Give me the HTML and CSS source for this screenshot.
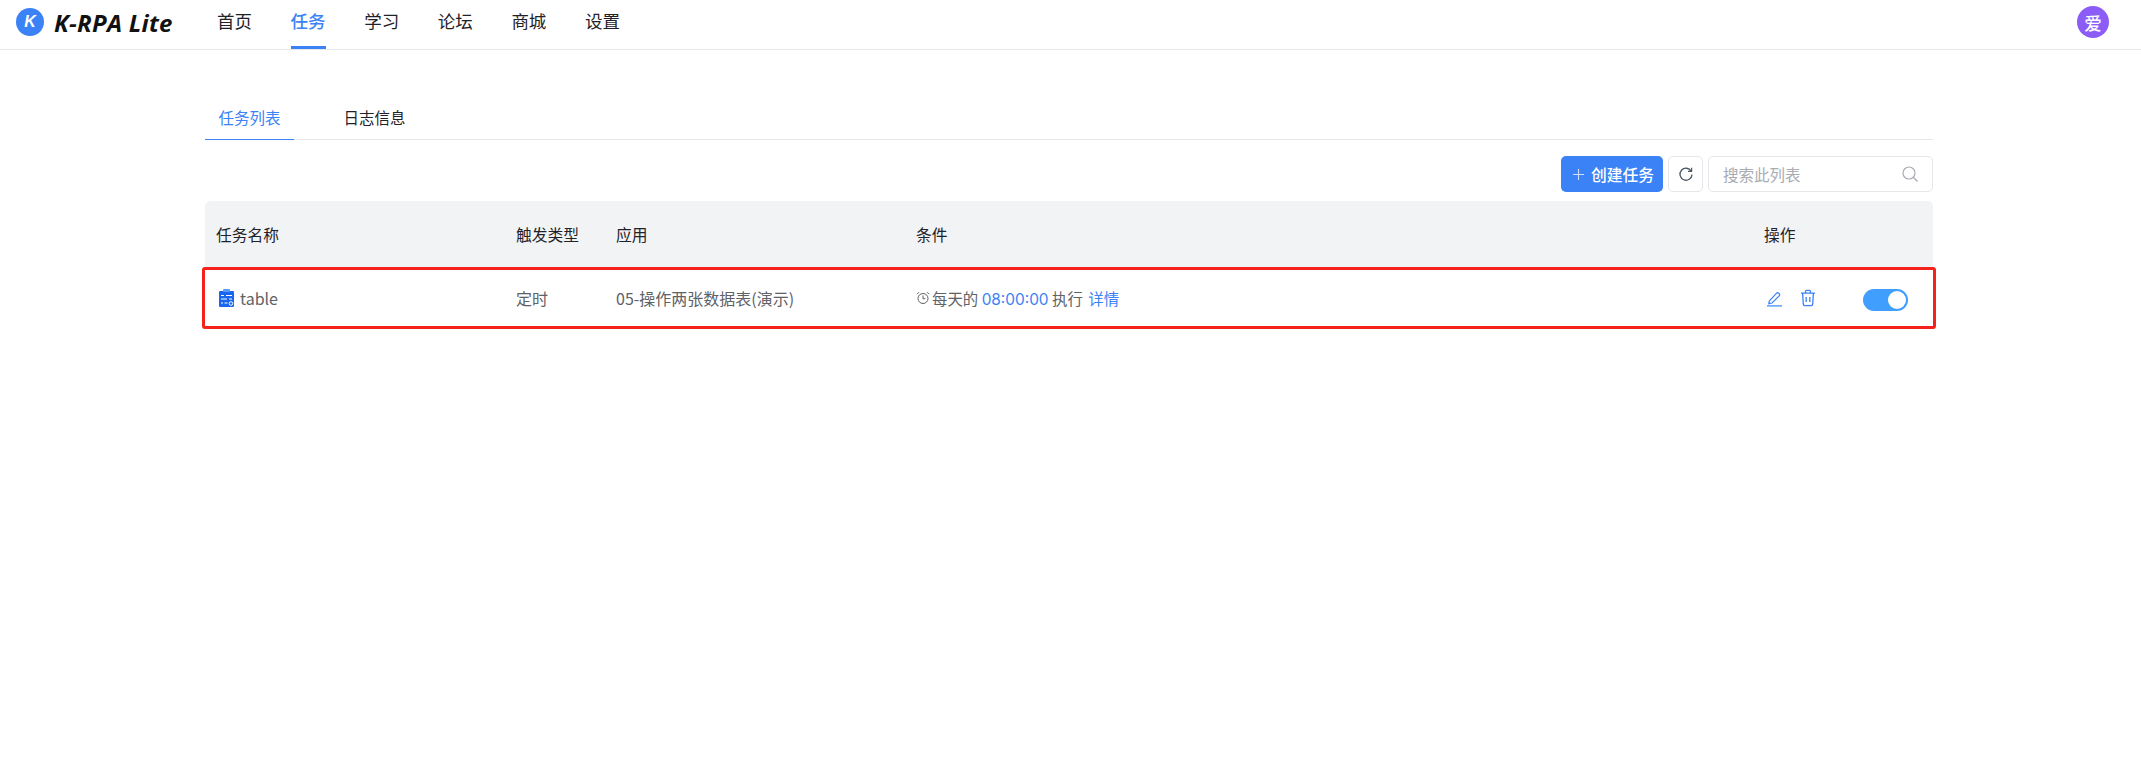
FILE: index.html
```html
<!DOCTYPE html>
<html lang="zh-CN">
<head>
    <meta charset="UTF-8">
    <title>K-RPA Lite</title>
    <link rel="stylesheet" href="styles.css">
</head>
<body>
    <header class="navbar">
        <div class="brand">
            <span class="brand-logo">K</span>
            <span class="brand-name">K-RPA Lite</span>
        </div>
        <nav class="nav">
            <a class="nav-item">首页</a>
            <a class="nav-item active">任务</a>
            <a class="nav-item">学习</a>
            <a class="nav-item">论坛</a>
            <a class="nav-item">商城</a>
            <a class="nav-item">设置</a>
        </nav>
        <span class="avatar">爱</span>
    </header>

    <main class="content">
        <div class="tabs">
            <a class="tab active">任务列表</a>
            <a class="tab">日志信息</a>
        </div>

        <div class="toolbar">
            <button class="btn-primary">
                <svg class="plus" width="11" height="11" viewBox="0 0 11 11" stroke="#fff" stroke-width="1.1">
                    <path d="M5.5 0v11M0 5.5h11"/>
                </svg>
                创建任务
            </button>
            <button class="btn-icon">
                <svg width="18" height="18" viewBox="0 0 18 18" fill="none" stroke="#4b5563" stroke-width="1.3">
                    <path d="M14.2 6.2A6 6 0 1 0 15 9.6"/>
                    <path d="M14.6 2.8v3.6H11" stroke-width="1.2"/>
                </svg>
            </button>
            <div class="search">
                <span class="search-text">搜索此列表</span>
                <svg width="18" height="18" viewBox="0 0 18 18" fill="none" stroke="#a8abb2" stroke-width="1.2">
                    <circle cx="8" cy="8" r="6"/>
                    <path d="M12.5 12.5L16.5 16.5"/>
                </svg>
            </div>
        </div>

        <div class="table-head grid-row">
            <div>任务名称</div>
            <div>触发类型</div>
            <div>应用</div>
            <div>条件</div>
            <div>操作</div>
        </div>

        <div class="table-row grid-row">
            <div class="task-name">
                <svg width="15" height="18" viewBox="0 0 15 18">
                    <rect x="0" y="2" width="15" height="16" rx="1" fill="#1a66f0"/>
                    <rect x="4" y="0" width="7" height="3" rx="1" fill="#5b9bf8"/>
                    <path d="M2 6.5h3M7 6.5h6M2 10h6M10 10h3M2 14h2M5.5 14h3" stroke="#fff" stroke-width="1.2"/>
                    <circle cx="12" cy="14.5" r="1.8" fill="none" stroke="#fff"/>
                </svg>
                <span>table</span>
            </div>
            <div>定时</div>
            <div>05-操作两张数据表(演示)</div>
            <div class="condition">
                <svg width="14" height="14" viewBox="0 0 14 14" fill="none" stroke="#606266">
                    <circle cx="7" cy="7.5" r="5"/>
                    <path d="M7 4.5v3.2h2.4M1 3.2L3 1.2M13 3.2L11 1.2"/>
                </svg>
                <span>每天的 <span class="link time">08:00:00</span> 执行 <span class="link detail">详情</span></span>
            </div>
            <div class="actions">
                <svg width="17" height="17" viewBox="0 0 17 17" fill="none" stroke="#3b82f6" stroke-width="1.2">
                    <path d="M3.4 10.8L10.6 3.2a1.5 1.5 0 0 1 2.1 0l.5.5a1.5 1.5 0 0 1 0 2.1L6 13l-3.2.7z"/>
                    <path d="M1 15.9h15"/>
                </svg>
                <svg class="trash" width="16" height="18" viewBox="0 0 16 18" fill="none" stroke="#3b82f6" stroke-width="1.3">
                    <path d="M1 4.2h14M5.5 4V2.5a1.2 1.2 0 0 1 1.2-1.2h2.6a1.2 1.2 0 0 1 1.2 1.2V4M2.6 4.2l.7 10.9a1.8 1.8 0 0 0 1.8 1.6h5.8a1.8 1.8 0 0 0 1.8-1.6l.7-10.9"/>
                    <path d="M6.2 8v5M9.8 8v5"/>
                </svg>
                <span class="switch"><span class="switch-knob"></span></span>
            </div>
        </div>
    </main>
</body>
</html>
```

FILE: styles.css
```css
* {
    box-sizing: border-box;
}
body {
    margin: 0;
    background: #fff;
    color: #1f2329;
    font-family: "Noto Sans CJK SC", "Noto Sans", sans-serif;
}
.navbar {
    display: flex;
    align-items: stretch;
    height: 50px;
    padding: 0 32px 0 16px;
    border-bottom: 1px solid #e5e7eb;
}
.brand {
    display: flex;
    align-items: center;
    width: 201px;
    padding-bottom: 5px;
}
.brand-logo {
    display: flex;
    align-items: center;
    justify-content: center;
    width: 28px;
    height: 28px;
    margin-right: 10px;
    border-radius: 50%;
    background: #3b82f6;
    color: #fff;
    font: italic bold 16px "Liberation Sans", sans-serif;
}
.brand-name {
    color: #111;
    font: italic bold 24px "Open Sans", sans-serif;
    letter-spacing: 0.3px;
}
.nav {
    display: flex;
    flex: 1;
    gap: 38.6px;
}
.nav-item {
    display: flex;
    align-items: center;
    height: 49px;
    padding-bottom: 6px;
    border-bottom: 3px solid transparent;
    font-size: 17.5px;
    color: #1f2329;
}
.nav-item.active {
    border-bottom-color: #3b82f6;
    color: #3b82f6;
    font-weight: 500;
}
.avatar {
    display: flex;
    align-items: center;
    justify-content: center;
    align-self: flex-start;
    width: 32px;
    height: 32px;
    margin-top: 6px;
    border-radius: 50%;
    background: #8b5cf6;
    color: #fff;
    font-size: 17.5px;
    font-weight: 500;
}
.content {
    width: 1728px;
    margin: 0 0 0 205px;
    padding-top: 47px;
}
.tabs {
    display: flex;
    height: 43px;
    border-bottom: 1px solid #e5e7eb;
}
.tab {
    display: flex;
    align-items: center;
    justify-content: center;
    width: 89px;
    margin-right: 36px;
    margin-bottom: -1px;
    padding-bottom: 3px;
    font-size: 15.5px;
}
.tab.active {
    border-bottom: 1px solid #3b82f6;
    color: #3b82f6;
}
.toolbar {
    display: flex;
    justify-content: flex-end;
    gap: 5px;
    margin-top: 16px;
    margin-bottom: 9px;
}
.btn-primary {
    display: flex;
    align-items: center;
    justify-content: center;
    width: 102px;
    height: 36px;
    padding: 0 0 0 3px;
    border: none;
    border-radius: 5px;
    background: #3b82f6;
    color: #fff;
    font: 500 15.75px "Noto Sans CJK SC", sans-serif;
}
.plus {
    margin-right: 7px;
    opacity: 0.75;
}
.btn-icon {
    display: flex;
    align-items: center;
    justify-content: center;
    width: 35px;
    height: 36px;
    padding: 0;
    border: 1px solid #e5e7eb;
    border-radius: 5px;
    background: #fff;
}
.search {
    display: flex;
    align-items: center;
    justify-content: space-between;
    width: 225px;
    height: 36px;
    padding: 0 13px 0 14px;
    border: 1px solid #e5e7eb;
    border-radius: 5px;
    color: #a8abb2;
    font-size: 15.5px;
}
.grid-row {
    display: grid;
    grid-template-columns: 300px 100px 300px 848px 1fr;
    align-items: center;
    padding-left: 11px;
    font-size: 15.75px;
}
.table-head {
    height: 66px;
    border-radius: 5px 5px 0 0;
    background: #f2f3f5;
    color: #1f2329;
}
.table-row {
    height: 62px;
    margin: 0 -3px;
    padding-left: 11px;
    border: 3px solid #f5221b;
    border-radius: 3px;
    color: #606266;
    font-size: 16px;
}
.task-name {
    display: flex;
    align-items: center;
    gap: 6px;
    padding-left: 3px;
}
.condition {
    display: flex;
    align-items: center;
    gap: 2px;
    font-size: 15.4px;
}
.link {
    color: #3b82f6;
}
.time {
    font-family: "Inter", "Noto Sans", sans-serif;
}
.detail {
    margin-left: 2px;
}
.actions {
    display: flex;
    align-items: center;
    padding-left: 2px;
}
.trash {
    margin-left: 17px;
}
.switch {
    display: flex;
    align-items: center;
    justify-content: flex-end;
    width: 45px;
    height: 22px;
    margin-top: 3px;
    margin-left: 47px;
    padding-right: 2px;
    border-radius: 11px;
    background: #409eff;
}
.switch-knob {
    width: 18px;
    height: 18px;
    border-radius: 50%;
    background: #fff;
}
```
